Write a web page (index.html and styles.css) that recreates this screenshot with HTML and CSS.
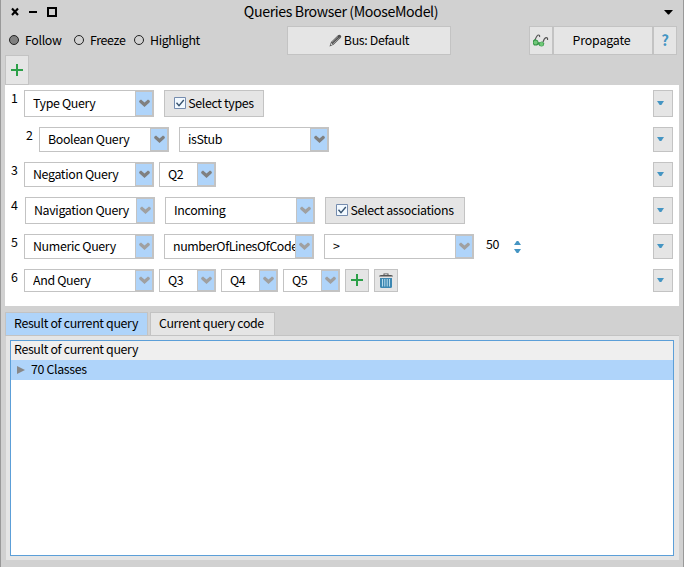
FILE: index.html
```html
<!DOCTYPE html>
<html lang="en">
<head>
<meta charset="utf-8">
<title>Queries Browser (MooseModel)</title>
<link rel="stylesheet" href="styles.css">
</head>
<body>
<svg class="defs" width="0" height="0">
  <symbol id="chev" viewBox="0 0 11 8"><path d="M0 2 2 .5 5.5 3.5 9 .5 11 2 10.5 3.5 5.5 8 .5 3.5Z"/></symbol>
  <symbol id="down" viewBox="0 0 7 4"><path d="M0 0h7L4.3 4H2.7Z"/></symbol>
  <symbol id="plus" viewBox="0 0 12 12"><path d="M5 0h2v5h5v2H7v5H5V7H0V5h5Z"/></symbol>
  <symbol id="check" viewBox="0 0 12 12"><path d="M.5.5h11v11H.5Z" fill="#f2f9ff" stroke="#758cae"/><path d="M2.5 5.8 5 8.6 9.8 3" fill="none" stroke="#37536f" stroke-width="1.4"/></symbol>
</svg>
<main class="window">
  <header class="titlebar">
    <svg class="controls" width="46" height="12" viewBox="0 0 46 12"><path d="M1 2.5 7 9M7 2.5 1 9" fill="none" stroke="#000" stroke-width="2.1"/><path d="M18 5h8v2h-8Z"/><path d="M37 2h8v8h-8Z" fill="none" stroke="#000" stroke-width="2"/></svg>
    <h1 class="title">Queries Browser (MooseModel)</h1>
    <svg class="menu" width="9" height="5" viewBox="0 0 9 5"><path d="M0 0h9L5 4.5H4Z"/></svg>
  </header>
  <section class="toolbar">
    <div class="radios">
      <span class="radio follow"><i class="dot on"></i>Follow</span>
      <span class="radio freeze"><i class="dot"></i>Freeze</span>
      <span class="radio highlight"><i class="dot"></i>Highlight</span>
    </div>
    <button class="btn bus"><svg width="13" height="13" viewBox="0 0 13 13"><path d="M.5 12.500 2 8 9 1.200Q10.500 0 11.800 1.400 13 2.700 11.500 4L4.500 10.800Z" fill="#505050"/><path d="M2.800 8.400 9 2.600M4 9.800 10.600 3.800" stroke="#b0b0b0" stroke-width=".8"/><path d="m1.500 11.200.9-2.200 1.500 1.500Z" fill="#ddd"/></svg><span>Bus: Default</span></button>
    <div class="actions">
      <button class="btn small"><svg width="16" height="13" viewBox="0 0 16 13"><path d="M2 6Q4 1 5.500 1 7 1 6.500 3M10 8Q11.500 4 13 3.700 15 3.500 14.500 6" fill="none" stroke="#555" stroke-width="1.200"/><path d="M0 6.500 2 5l3 1.500.5 1.800h1L9 7.500l2.300 1.500-.5 2.500L9 12.600 6.500 12l-1-1.500L4 11.500H1L0 10Z" fill="#359447"/><circle cx="2.600" cy="8.400" r="2" fill="#70c878"/><circle cx="8.500" cy="10" r="2" fill="#70c878"/></svg></button>
      <button class="btn propagate"><span>Propagate</span></button>
      <button class="btn small help"><span>?</span></button>
    </div>
  </section>
  <div class="addbar"><button class="btn add"><svg class="green" width="12" height="12"><use href="#plus"/></svg></button></div>
  <section class="queries">
    <div class="row tall r1"><span class="num">1</span>
      <div class="combo w130"><span class="val">Type Query</span><i class="drop"><svg width="11" height="8"><use href="#chev"/></svg></i></div>
      <button class="btn pick types"><svg width="12" height="12"><use href="#check"/></svg><span>Select types</span></button>
      <button class="btn more"><svg width="7" height="4"><use href="#down"/></svg></button></div>
    <div class="row r2"><span class="num">2</span>
      <div class="combo w130"><span class="val">Boolean Query</span><i class="drop"><svg width="11" height="8"><use href="#chev"/></svg></i></div>
      <div class="combo w150"><span class="val">isStub</span><i class="drop"><svg width="11" height="8"><use href="#chev"/></svg></i></div>
      <button class="btn more"><svg width="7" height="4"><use href="#down"/></svg></button></div>
    <div class="row tight r3"><span class="num">3</span>
      <div class="combo w130"><span class="val">Negation Query</span><i class="drop"><svg width="11" height="8"><use href="#chev"/></svg></i></div>
      <div class="combo w57"><span class="val">Q2</span><i class="drop"><svg width="11" height="8"><use href="#chev"/></svg></i></div>
      <button class="btn more"><svg width="7" height="4"><use href="#down"/></svg></button></div>
    <div class="row tall light r4"><span class="num">4</span>
      <div class="combo w130"><span class="val">Navigation Query</span><i class="drop"><svg width="11" height="8"><use href="#chev"/></svg></i></div>
      <div class="combo w150"><span class="val">Incoming</span><i class="drop"><svg width="11" height="8"><use href="#chev"/></svg></i></div>
      <button class="btn pick assoc"><svg width="12" height="12"><use href="#check"/></svg><span>Select associations</span></button>
      <button class="btn more"><svg width="7" height="4"><use href="#down"/></svg></button></div>
    <div class="row light r5"><span class="num">5</span>
      <div class="combo w130"><span class="val">Numeric Query</span><i class="drop"><svg width="11" height="8"><use href="#chev"/></svg></i></div>
      <div class="combo w150"><span class="val wide">numberOfLinesOfCode</span><i class="drop"><svg width="11" height="8"><use href="#chev"/></svg></i></div>
      <div class="combo w150"><span class="val">&gt;</span><i class="drop"><svg width="11" height="8"><use href="#chev"/></svg></i></div>
      <span class="amount">50</span>
      <svg class="spin" width="7" height="12" viewBox="0 0 7 12"><path d="M0 4 2.700 0h1.600L7 4ZM0 8h7L4.300 12H2.700Z"/></svg>
      <button class="btn more"><svg width="7" height="4"><use href="#down"/></svg></button></div>
    <div class="row short tight light r6"><span class="num">6</span>
      <div class="combo w130"><span class="val">And Query</span><i class="drop"><svg width="11" height="8"><use href="#chev"/></svg></i></div>
      <div class="combo w57"><span class="val">Q3</span><i class="drop"><svg width="11" height="8"><use href="#chev"/></svg></i></div>
      <div class="combo w57"><span class="val">Q4</span><i class="drop"><svg width="11" height="8"><use href="#chev"/></svg></i></div>
      <div class="combo w57"><span class="val">Q5</span><i class="drop"><svg width="11" height="8"><use href="#chev"/></svg></i></div>
      <button class="btn small"><svg class="green" width="12" height="12"><use href="#plus"/></svg></button>
      <button class="btn small"><svg class="bin" width="14" height="15" viewBox="0 0 14 15"><path d="M0 3.500Q0 2 2 2h2.500V.5h5V2H12q2 0 2 1.500Z" fill="#555"/><path d="M5.500 1.200h3V2h-3Z" fill="#ddd"/><path d="M1 5h12v8.500Q13 15 11.500 15h-9Q1 15 1 13.500Z" fill="#3d88b2"/><path d="M3.500 6v7.500M5.800 6v7.500M8.200 6v7.500M10.500 6v7.500" stroke="#b8dced"/></svg></button>
      <button class="btn more"><svg width="7" height="4"><use href="#down"/></svg></button></div>
  </section>
  <nav class="tabs"><span class="tab active"><b>Result of current query</b></span><span class="tab other"><b>Current query code</b></span></nav>
  <section class="panel">
    <div class="tree">
      <div class="head"><b>Result of current query</b></div>
      <div class="item"><svg width="8" height="8" viewBox="0 0 8 8"><path d="M0 0 8 4 0 8Z" fill="#888"/></svg><b>70 Classes</b></div>
    </div>
  </section>
</main>
</body>
</html>
```
FILE: styles.css
```css
* { box-sizing: border-box; }
body { margin: 0; background: #fff; }
.defs { display: block; position: absolute; }
svg { display: block; flex: none; }
.window {
  width: 684px; height: 567px;
  border: solid #999; border-width: 0 1px;
  background: #d1d1d1; color: #000;
  font: 12.4px/18px "Noto Sans CJK SC", "Open Sans", sans-serif;
  letter-spacing: -.35px;
  display: flex; flex-direction: column;
}
b, i, h1 { font-weight: 400; font-style: normal; }
span, b, h1 { white-space: nowrap; }
.titlebar { height: 26px; display: grid; grid-template-columns: 230px 1fr 230px; align-items: center; flex: none; }
.controls { margin: -2px 0 0 10px; }
.title { margin: -4px 2px 0 0; font-size: 14.2px; letter-spacing: -.4px; text-align: center; line-height: 20px; }
.menu { margin: -2px 10px 0 auto; }
.toolbar { height: 29px; flex: none; display: flex; }
.radios { width: 286px; display: flex; align-items: center; padding: 0 0 1px 8px; }
.radio { display: flex; align-items: center; gap: 6px; }
.follow { width: 65px; }
.freeze { width: 60px; }
.dot { width: 10px; height: 10px; border: 1px solid #222; border-radius: 50%; }
.dot.on { background: #808080; }
.btn {
  margin: 0; padding: 0; border: 1px solid #c3c3c3; border-radius: 0;
  background: #e5e5e5; color: #000; font: inherit; letter-spacing: inherit;
  display: flex; align-items: center; justify-content: center; flex: none;
}
.btn span, .val { margin-top: -2px; }
.bus { width: 164px; gap: 2px; }
.bus svg { margin-top: -1px; }
.actions { display: flex; margin-left: 78px; }
.small { width: 24px; }
.propagate { width: 100px; letter-spacing: -.15px; padding-right: 3px; }
.help { color: #4595c3; font-weight: 700; font-size: 15px; }
.addbar { padding-left: 4px; height: 30px; flex: none; display: flex; }
.add { width: 24px; }
.green { fill: #2ca048; }
.short .green, .bin { margin-top: -1px; }
.queries { width: 674px; height: 221px; margin-left: 4px; background: #fff; flex: none; padding-top: 5px; }
.row { height: 25px; display: flex; gap: 10px; margin-bottom: 10px; padding-right: 6px; }
.tall { height: 27px; }
.short { height: 23px; }
.tight { gap: 5px; }
.num { width: 19px; padding-left: 6px; margin-right: -10px; height: 18px; line-height: 16px; flex: none; }
.tight .num { margin-right: -5px; }
.r2 { padding-left: 15px; }
.r4 .num { width: 20px; }
.combo { border: 1px solid #c3c3c3; display: flex; flex: none; align-items: center; padding-left: 8px; }
.val { flex: 1; min-width: 0; overflow: hidden; }
.wide { letter-spacing: -.42px; }
.drop {
  width: 18px; align-self: stretch; flex: none;
  border: 1px solid #c3c3c3;
  background: #afd4fa; fill: #808080;
  display: flex; align-items: center; justify-content: center;
}
.drop svg { margin: -1px -1px 0 0; }
.light .drop { fill: #a0a0a0; }
.w130 { width: 130px; }
.w150 { width: 150px; }
.w57 { width: 57px; }
.types { width: 100px; }
.assoc { width: 140px; }
.pick { gap: 2px; }
.pick svg { margin-top: -1px; }
.more { width: 20px; margin-left: auto; fill: #4595c3; padding-right: 5px; }
.more svg { margin-top: -1px; }
.amount { padding-left: 2px; line-height: 20px; width: 18px; }
.spin { fill: #4595c3; margin: 7px 0 0 2px; }
.tabs { height: 24px; margin: 6px 0 0 4px; display: flex; flex: none; gap: 2px; }
.tab { border: 1px solid #c3c3c3; border-bottom: 0; background: #e5e5e5; padding: 1px 8px 0; line-height: 18px; }
.active { width: 143px; background: #afd4fa; }
.other { width: 125px; }
.panel { width: 673px; height: 225px; margin: -1px 0 0 5px; border-top: 1px solid #c3c3c3; background: #e5e5e5; padding: 4px; }
.tree { height: 216px; width: 664px; border: 1px solid #5c9fd8; background: #fff; }
.head { height: 19px; background: #efefef; padding-left: 3px; line-height: 16px; }
.item { height: 20px; background: #afd4fa; display: flex; align-items: center; padding-left: 6px; gap: 6px; }
.item b { margin-top: -2px; }
```
